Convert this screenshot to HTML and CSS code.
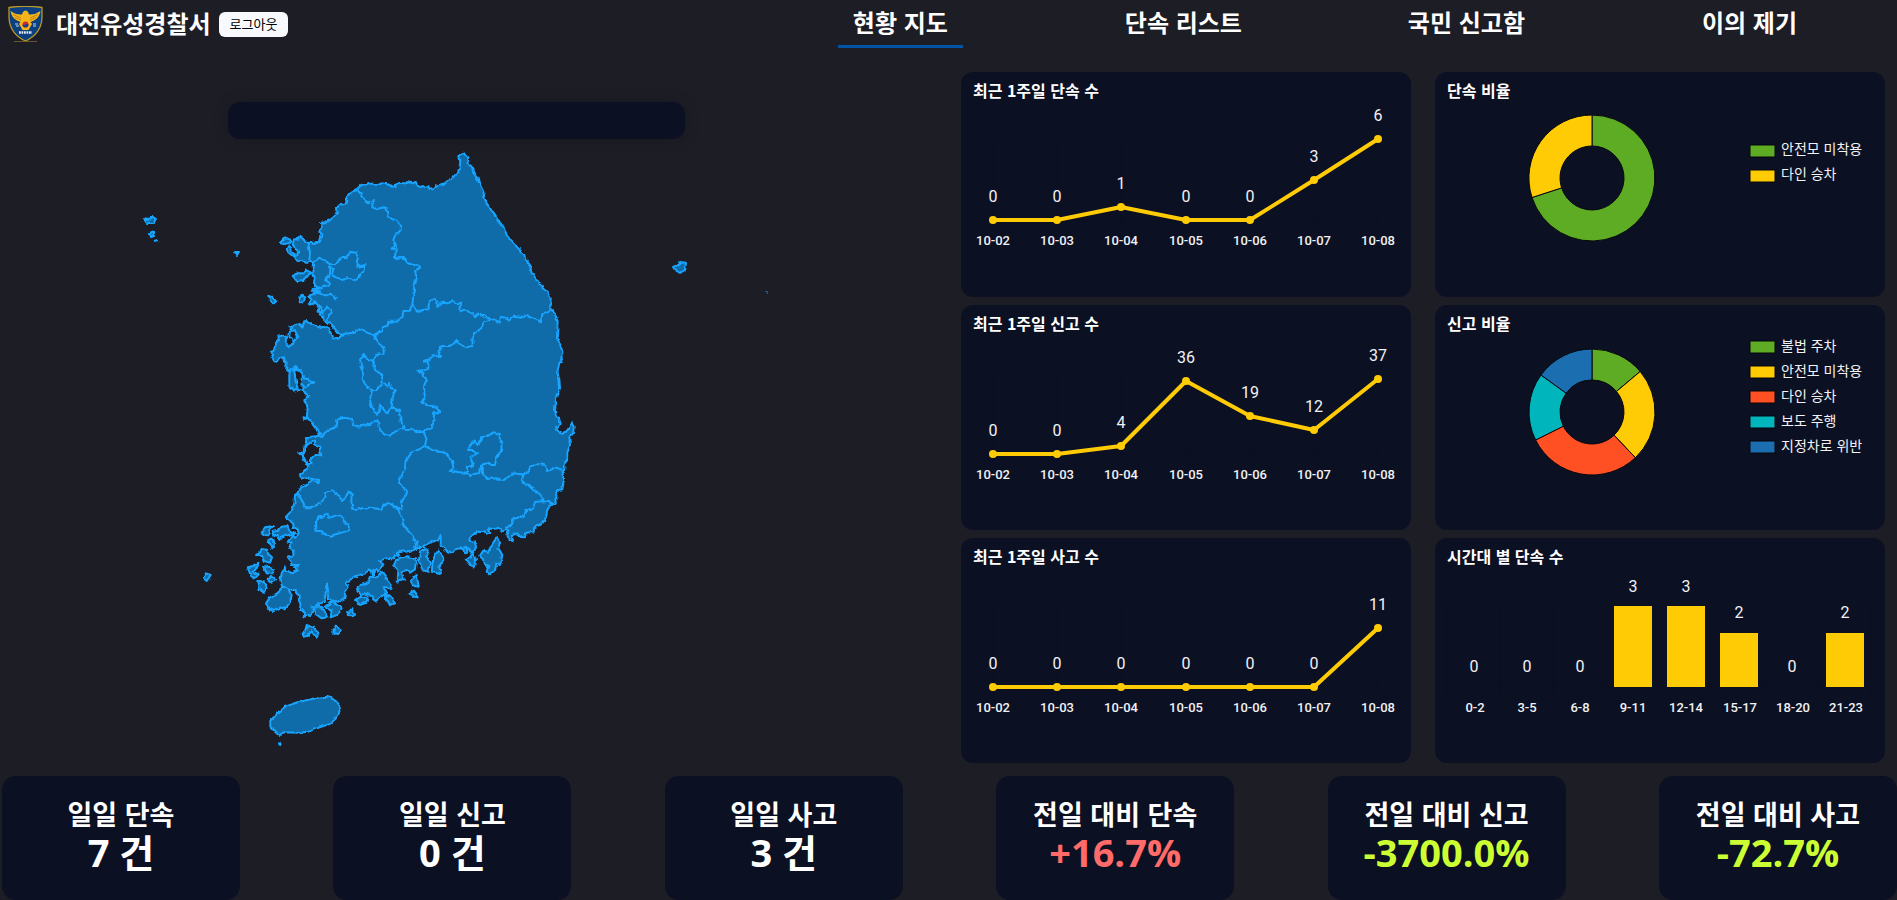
FILE: index.html
```html
<!DOCTYPE html>
<html lang="ko">
<head>
<meta charset="utf-8">
<meta name="viewport" content="width=device-width, initial-scale=1">
<title>대전유성경찰서 - 현황 지도</title>
<link rel="stylesheet" href="styles.css">
</head>
<body>
<header class="header">
  <div class="brand">
    <svg class="logo" viewBox="0 0 35 36" aria-hidden="true">
      <path d="M1 1.500Q17.500-.8 34 1.500V12Q33 28 17.500 35Q2 28 1 12Z" fill="#0b3f7f" stroke="#b8962a" stroke-width="1.300"/>
      <path d="M2.500 5Q8 9 14 8.500Q15 4.500 17.500 4.500Q20 4.500 21 8.500Q27 9 32.500 5Q31.500 11.500 26 14.500L22.500 16L24 18L20.500 24H14.500L11 18L12.500 16L9 14.500Q3.500 11.500 2.500 5Z" fill="#f3b51b"/>
      <path d="M5 8.500L13 12M7 11.500L13 14M30 8.500L22 12M28 11.500L22 14" stroke="#b97708" stroke-width=".8"/>
      <circle cx="17.500" cy="18.500" r="3" fill="#d3262f"/><path d="M14.500 18.500a3 3 0 0 0 6 0q-1.500-1.500-3 0t-3 0Z" fill="#173f95"/>
      <path d="M7 18h3M8 20h3M25 18h3M25 20h3" stroke="#c9d6ea" stroke-width="1.200"/>
      <path d="M11 26.500h13" stroke="#e8edf5" stroke-width="2.400" stroke-dasharray="1.800 .7"/>
      <path d="M6 35.500H29" stroke="#75652c" stroke-width=".8"/>
    </svg>
    <span class="brand-name">대전유성경찰서</span>
    <button class="logout" type="button">로그아웃</button>
  </div>
  <nav class="nav">
    <a class="nav-link active" href="#map">현황 지도</a>
    <a class="nav-link" href="#list">단속 리스트</a>
    <a class="nav-link" href="#report">국민 신고함</a>
    <a class="nav-link" href="#objection">이의 제기</a>
  </nav>
</header>

<main class="main">
  <section class="map-area" id="map">
    <div class="map-caption"></div>
    <svg class="map" viewBox="0 139 913 624" role="img" aria-label="대한민국 지도">
      <defs>
        <filter id="coast" x="0" y="0" width="1" height="1" color-interpolation-filters="sRGB">
          <feTurbulence type="fractalNoise" baseFrequency=".18" numOctaves="2" seed="4"/>
          <feDisplacementMap in="SourceGraphic" scale="4" xChannelSelector="R" yChannelSelector="G"/>
        </filter>
      </defs>
      <g filter="url(#coast)">
      <rect x="0" y="139" width="913" height="624" fill="none"/>
      <g class="land" transform="translate(240 140) scale(.33333)">
        <path d="M670 38L663 40L658 48L661 65L659 82L655 97L645 105L635 118L622 124L615 130L603 133L590 140L586 139L584 147L577 148L565 138L552 140L535 136L530 133L527 125L519 130L510 127L500 130L490 130L478 128L468 137L455 140L448 134L440 132L425 130L410 136L400 131L388 131L377 136L360 138L352 146L340 152L325 163L320 172L318 188L308 194L300 194L291 203L292 216L283 230L270 240L255 247L243 248L245 262L240 270L244 285L240 305L222 312L215 307L203 305L196 306L190 298L180 290L172 298L162 298L158 310L165 325L175 335L172 345L165 352L172 365L185 362L192 368L203 368L210 362L220 370L218 380L221 390L218 400L224 412L222 430L230 441L245 445L218 447L217 452L240 454L222 462L205 467L215 478L206 494L225 490L225 484L235 498L233 515L245 516L242 525L253 538L262 548L272 553L285 567L300 585L300 592L292 597L278 595L270 578L262 562L240 560L215 552L205 546L200 540L195 543L187 560L175 553L160 558L150 562L148 568L165 572L163 580L175 590L163 600L158 615L147 622L140 612L141 590L128 586L115 590L117 600L108 608L103 622L104 632L93 635L100 643L94 652L98 655L103 664L112 665L118 655L130 652L132 665L140 670L138 688L145 694L155 685L162 686L160 682L165 680L178 689L184 690L186 705L190 715L188 735L190 755L205 767L208 771L193 780L198 790L201 795L203 805L200 835L190 832L192 840L205 838L215 843L219 852L230 865L235 882L243 880L245 887L195 892L202 898L200 912L190 922L187 938L175 941L187 944L192 960L205 980L203 985L180 1003L182 1012L190 1015L220 1017L235 1020L232 1027L215 1022L195 1035L182 1045L175 1060L165 1067L163 1090L155 1112L138 1130L150 1142L160 1152L160 1162L172 1167L176 1178L170 1195L158 1187L152 1195L143 1205L156 1210L148 1222L158 1230L161 1245L142 1250L152 1262L155 1275L175 1275L162 1282L175 1290L156 1300L139 1290L135 1282L125 1300L121 1320L125 1335L142 1348L155 1350L167 1350L175 1359L177 1380L182 1395L179 1410L191 1411L193 1432L201 1425L210 1428L222 1405L217 1400L240 1392L252 1385L257 1365L259 1335L261 1330L265 1358L263 1378L279 1383L295 1385L313 1375L316 1352L323 1340L318 1328L327 1325L345 1310L361 1303L367 1306L375 1305L386 1285L395 1290L400 1310L402 1290L408 1287L413 1295L425 1285L430 1270L417 1262L440 1255L462 1255L465 1245L478 1248L473 1235L490 1231L503 1237L520 1230L533 1225L550 1218L565 1210L577 1205L585 1203L597 1195L602 1185L602 1218L615 1227L625 1235L638 1240L648 1227L662 1225L672 1229L677 1240L684 1227L698 1237L708 1220L704 1205L688 1202L690 1190L708 1181L712 1172L735 1174L738 1184L752 1180L745 1165L760 1167L775 1163L785 1175L800 1170L806 1202L815 1205L818 1185L831 1180L842 1191L855 1192L859 1178L880 1175L883 1162L905 1152L915 1140L920 1125L921 1112L930 1096L933 1097L947 1088L946 1070L955 1050L967 1048L972 1020L972 1010L967 1003L972 992L975 970L981 958L983 935L990 915L988 895L1000 878L1001 860L995 848L983 870L970 882L958 878L950 868L948 861L962 852L957 835L948 827L945 812L947 785L950 765L960 745L958 718L953 695L957 672L968 655L967 635L960 612L951 595L953 540L943 520L931 500L932 475L920 455L908 445L905 433L890 423L887 410L875 400L870 375L855 355L853 345L835 325L812 302L800 285L793 265L772 237L750 205L740 190L733 172L730 155L720 135L712 115L700 98L695 80L686 68L684 55Z"/>
        <g class="sea">
          <path d="M160 684L178 690L188 705L187 752L174 750L163 705ZM203 913L222 902L222 913L238 920L244 946L225 944L210 960L212 972L200 972L188 944ZM150 572L165 572L174 590L160 604L148 590Z"/>
        </g>
        <path d="M222 455L235 460L255 466L275 465L285 475L292 472M237 494L250 520L260 500L273 512L268 530L258 545M163 690L165 710L172 745L165 752L148 740L148 705L150 692ZM188 715L208 717L212 725L223 727L205 735L193 745"/>
        <g class="border">
          <path d="M352 146L355 158L365 160L375 185L385 190L402 180L396 195L412 207L430 202L440 204L443 232L460 237L483 255L482 270L465 287L460 300L465 317L458 326L467 327L465 355L485 352L510 370L530 374L543 384L525 393L531 413L523 440L520 465L517 495L530 513L565 508L567 485L580 477L593 485L592 500L605 488L625 490L638 481L650 490L667 488L655 507L660 514L675 508L690 519L700 520L705 532L718 520L740 532L765 540L780 547L783 530L795 533L805 542L822 530L840 533L860 525L880 536L900 544L907 525L935 508M517 495L510 512L490 513L488 530L470 545L445 545L442 558L425 563L427 573L402 583L405 598M300 585L325 580L345 578L355 568L375 575L402 587L412 602L430 625L432 642L415 640L400 660L400 680M752 538L733 545L725 560L705 578L697 594L698 618L680 622L662 614L648 602L637 618L605 618L595 635L600 652L580 645L568 658L552 663L563 665L568 682L552 690L532 692L550 700L552 710L560 718L552 738L554 770L545 788L560 795L590 800L600 817L583 816L580 845L575 865L550 875L530 877L513 867L500 868L490 862L482 845L480 812L455 802L440 820L422 797L412 825L395 800L390 780L396 750L380 742L368 718L372 700L363 675L360 655L372 645L385 658L400 663L405 690L420 700L428 715L422 735L410 750L396 750M428 732L443 738L448 729L456 748L467 751L459 765L455 802M245 887L265 870L290 860L292 838L315 833L337 838L340 855L355 860L385 855L412 840L418 870L432 882L450 890L465 875L490 865M550 875L560 897L555 915L565 925L583 933L615 938L635 960L640 982L628 992L660 997L680 998L690 1007L705 1001L720 1000L725 975L745 968L750 975L765 975L772 950L783 935L785 915L779 900L780 882L760 877L740 890L727 890L725 900L711 915L704 902L690 915L687 930L700 930L711 940L698 948L687 953L698 965L695 982L680 980L682 998M725 975L730 1003L745 1017L770 1015L792 1020L820 1000L842 1003L850 1007L868 992L870 980L890 972L915 975L920 993L940 985L955 988L970 993M850 1007L845 1024L865 1035L880 1050L895 1058L910 1075L907 1085L925 1082L940 1093M910 1083L885 1086L880 1105L855 1112L850 1128L820 1137L815 1157L798 1163L803 1175M555 917L540 927L515 938L497 962L495 985L485 1000L477 1027L490 1040L500 1062L485 1085L487 1108L473 1105L445 1088L430 1095L423 1108L405 1105L390 1103L365 1105L350 1110L338 1105L334 1083L335 1062L325 1055L315 1077L305 1080L290 1060L275 1050L255 1058L253 1075L240 1092L215 1100L197 1106L190 1088L175 1063M473 1105L485 1130L490 1155L505 1170L520 1195L530 1205L525 1225L545 1220M228 1145L233 1132L250 1130L260 1122L272 1133L290 1125L302 1127L310 1145L327 1155L325 1172L305 1178L287 1183L270 1188L258 1183L245 1174L229 1172ZM203 305L210 335L208 360L218 370L238 353L255 362L270 373L290 372L302 350L322 352L330 335L348 338L355 355L352 380L373 375L370 395L360 410L340 422L325 415L305 420L275 405L280 388L267 380L268 400L258 420L270 432L240 445"/>
        </g>
        <g class="islands">
          <path d="M121 308L128 296L142 295L155 301L146 310L131 312ZM142 322L150 316L152 332L165 345L170 348L158 348L140 332ZM158 408L175 400L190 400L198 388L216 400L202 407L190 420L170 423ZM88 470L98 470L108 485L96 490L90 486ZM178 474L186 467L196 472L192 482L182 487Z"/>
          <path transform="translate(-150 1020)" d="M215 158L225 142L250 138L238 150L235 166L225 165ZM248 155L265 152L275 140L292 138L302 155L315 160L295 165L280 168L270 180L260 168L250 165ZM232 182L245 176L253 190L247 205L240 190ZM198 225L210 218L215 207L232 210L235 222L246 232L240 248L222 243L215 228ZM173 262L192 258L205 248L203 262L188 275L206 283L195 295L183 288L178 275ZM222 258L240 262L252 270L248 282L230 280ZM233 298L245 290L257 300L245 308ZM205 303L220 304L233 320L220 338L209 328ZM228 370L240 352L265 338L275 320L290 325L305 345L300 365L287 388L272 382L250 393L236 387ZM373 385L390 378L402 392L412 412L395 415L375 400ZM405 380L430 362L440 375L458 385L440 405L422 412L425 390ZM468 393L480 395L487 388L488 400L497 403L483 410ZM495 360L510 350L533 350L530 368L510 375ZM502 330L512 315L530 310L540 290L560 292L575 275L605 315L600 325L582 325L590 340L572 350L560 362L550 355L540 345L520 340L512 345ZM585 348L598 345L615 370L600 376L592 362ZM618 240L650 232L678 235L675 268L660 278L650 270L635 275L642 300L620 305L622 270L612 258ZM663 300L680 285L686 320L665 315ZM657 340L672 332L686 352L668 350ZM690 215L705 205L718 215L708 230L720 250L715 275L697 270L687 240ZM728 245L735 225L745 212L760 240L748 258L753 282L725 275ZM820 205L828 200L832 218L822 218ZM827 237L840 232L848 220L858 240L855 260L840 255ZM868 230L880 212L895 215L905 195L920 173L930 185L925 205L937 225L930 255L920 250L915 270L900 283L890 275L895 258L882 242ZM335 460L345 455L350 435L370 442L385 455L380 473L365 455L350 468L340 470ZM430 450L440 438L452 450L447 462L430 460ZM40 295L48 280L62 285L50 303ZM241 722L258 705L285 680L330 665L375 655L408 650L425 655L440 663L453 685L442 705L425 730L380 745L355 755L325 758L280 757L270 768L255 755L241 740ZM257 695L262 703M267 790L272 793L268 796Z"/>
        </g>
      </g>
      <g class="land">
        <path d="M144 218L148 219L153 217L156 219L153 224L147 224ZM150 234L154 232L154 236L151 237ZM154 241L158 240M235 252L239 252L237 255ZM673 267L678 265L680 262L686 263L685 270L680 273L675 270ZM767 292L768 293"/>
      </g>
      </g>
    </svg>
  </section>

  <section class="charts">
    <article class="panel">
      <h2 class="panel-title">최근 1주일 단속 수</h2>
      <svg class="chart" viewBox="0 36 450 189" role="img" aria-label="최근 1주일 단속 수">
        <path class="grid" d="M32 67V158M96 67V158M160 67V158M225 67V158M289 67V158M353 67V158M417 67V158M32 148H417"/>
        <path class="line" d="M32 148L96 148L160 135L225 148L289 148L353 108L417 67"/>
        <g class="dots"><circle cx="32" cy="148" r="4"/><circle cx="96" cy="148" r="4"/><circle cx="160" cy="135" r="4"/><circle cx="225" cy="148" r="4"/><circle cx="289" cy="148" r="4"/><circle cx="353" cy="108" r="4"/><circle cx="417" cy="67" r="4"/></g>
        <g class="values"><text x="32" y="130">0</text><text x="96" y="130">0</text><text x="160" y="117">1</text><text x="225" y="130">0</text><text x="289" y="130">0</text><text x="353" y="90">3</text><text x="417" y="49">6</text></g>
        <g class="ticks"><text x="32" y="173">10-02</text><text x="96" y="173">10-03</text><text x="160" y="173">10-04</text><text x="225" y="173">10-05</text><text x="289" y="173">10-06</text><text x="353" y="173">10-07</text><text x="417" y="173">10-08</text></g>
      </svg>
    </article>
    <article class="panel">
      <h2 class="panel-title">단속 비율</h2>
      <svg class="chart" viewBox="0 36 450 189" role="img" aria-label="단속 비율">
        <g class="donut" transform="translate(157 106)">
          <path class="c1" d="M0-63A63 63 0 1 1-60 19.500L-30.400 9.900A32 32 0 1 0 0-32Z"/>
          <path class="c2" d="M-60 19.500A63 63 0 0 1 0-63V-32A32 32 0 0 0-30.400 9.900Z"/>
          <rect class="c1" x="158" y="-33" width="25" height="12"/><rect class="c2" x="158" y="-8" width="25" height="12"/>
        </g>
        <g class="legend"><text x="346" y="82">안전모 미착용</text><text x="346" y="107">다인 승차</text></g>
      </svg>
    </article>
    <article class="panel">
      <h2 class="panel-title">최근 1주일 신고 수</h2>
      <svg class="chart" viewBox="0 36 450 189" role="img" aria-label="최근 1주일 신고 수">
        <path class="grid" d="M32 67V158M96 67V158M160 67V158M225 67V158M289 67V158M353 67V158M417 67V158M32 149H417"/>
        <path class="line" d="M32 149L96 149L160 141L225 76L289 111L353 125L417 74"/>
        <g class="dots"><circle cx="32" cy="149" r="4"/><circle cx="96" cy="149" r="4"/><circle cx="160" cy="141" r="4"/><circle cx="225" cy="76" r="4"/><circle cx="289" cy="111" r="4"/><circle cx="353" cy="125" r="4"/><circle cx="417" cy="74" r="4"/></g>
        <g class="values"><text x="32" y="131">0</text><text x="96" y="131">0</text><text x="160" y="123">4</text><text x="225" y="58">36</text><text x="289" y="93">19</text><text x="353" y="107">12</text><text x="417" y="56">37</text></g>
        <g class="ticks"><text x="32" y="174">10-02</text><text x="96" y="174">10-03</text><text x="160" y="174">10-04</text><text x="225" y="174">10-05</text><text x="289" y="174">10-06</text><text x="353" y="174">10-07</text><text x="417" y="174">10-08</text></g>
      </svg>
    </article>
    <article class="panel">
      <h2 class="panel-title">신고 비율</h2>
      <svg class="chart" viewBox="0 36 450 189" role="img" aria-label="신고 비율">
        <g class="donut" transform="translate(157 107)">
          <path class="c1" d="M0-63A63 63 0 0 1 48.200-40.500L24.500-20.600A32 32 0 0 0 0-32Z"/>
          <path class="c2" d="M48.200-40.500A63 63 0 0 1 43.400 45.700L22 23.200A32 32 0 0 0 24.500-20.600Z"/>
          <path class="c3" d="M43.400 45.700A63 63 0 0 1-56.400 28L-28.700 14.200A32 32 0 0 0 22 23.200Z"/>
          <path class="c4" d="M-56.400 28A63 63 0 0 1-51-37L-25.900-18.800A32 32 0 0 0-28.700 14.200Z"/>
          <path class="c5" d="M-51-37A63 63 0 0 1 0-63V-32A32 32 0 0 0-25.900-18.800Z"/>
          <rect class="c1" x="158" y="-71" width="25" height="12"/><rect class="c2" x="158" y="-46" width="25" height="12"/><rect class="c3" x="158" y="-21" width="25" height="12"/><rect class="c4" x="158" y="4" width="25" height="12"/><rect class="c5" x="158" y="29" width="25" height="12"/>
        </g>
        <g class="legend"><text x="346" y="46">불법 주차</text><text x="346" y="71">안전모 미착용</text><text x="346" y="96">다인 승차</text><text x="346" y="121">보도 주행</text><text x="346" y="146">지정차로 위반</text></g>
      </svg>
    </article>
    <article class="panel">
      <h2 class="panel-title">최근 1주일 사고 수</h2>
      <svg class="chart" viewBox="0 36 450 189" role="img" aria-label="최근 1주일 사고 수">
        <path class="grid" d="M32 67V158M96 67V158M160 67V158M225 67V158M289 67V158M353 67V158M417 67V158M32 149H417"/>
        <path class="line" d="M32 149L96 149L160 149L225 149L289 149L353 149L417 90"/>
        <g class="dots"><circle cx="32" cy="149" r="4"/><circle cx="96" cy="149" r="4"/><circle cx="160" cy="149" r="4"/><circle cx="225" cy="149" r="4"/><circle cx="289" cy="149" r="4"/><circle cx="353" cy="149" r="4"/><circle cx="417" cy="90" r="4"/></g>
        <g class="values"><text x="32" y="131">0</text><text x="96" y="131">0</text><text x="160" y="131">0</text><text x="225" y="131">0</text><text x="289" y="131">0</text><text x="353" y="131">0</text><text x="417" y="72">11</text></g>
        <g class="ticks"><text x="32" y="174">10-02</text><text x="96" y="174">10-03</text><text x="160" y="174">10-04</text><text x="225" y="174">10-05</text><text x="289" y="174">10-06</text><text x="353" y="174">10-07</text><text x="417" y="174">10-08</text></g>
      </svg>
    </article>
    <article class="panel">
      <h2 class="panel-title">시간대 별 단속 수</h2>
      <svg class="chart" viewBox="0 36 450 189" role="img" aria-label="시간대 별 단속 수">
        <path class="grid" d="M12 68V159M65 68V159M118 68V159M171 68V159M224 68V159M277 68V159M330 68V159M383 68V159M436 68V159M12 149H436"/>
        <g class="bars"><rect x="179" y="68" width="38" height="81"/><rect x="232" y="68" width="38" height="81"/><rect x="285" y="95" width="38" height="54"/><rect x="391" y="95" width="38" height="54"/></g>
        <g class="values"><text x="39" y="134">0</text><text x="92" y="134">0</text><text x="145" y="134">0</text><text x="198" y="54">3</text><text x="251" y="54">3</text><text x="304" y="80">2</text><text x="357" y="134">0</text><text x="410" y="80">2</text></g>
        <g class="ticks"><text x="40" y="174">0-2</text><text x="92" y="174">3-5</text><text x="145" y="174">6-8</text><text x="198" y="174">9-11</text><text x="251" y="174">12-14</text><text x="305" y="174">15-17</text><text x="358" y="174">18-20</text><text x="411" y="174">21-23</text></g>
      </svg>
    </article>
  </section>
</main>

<section class="stats">
  <div class="stat"><h3 class="stat-title">일일 단속</h3><p class="stat-value">7 건</p></div>
  <div class="stat"><h3 class="stat-title">일일 신고</h3><p class="stat-value">0 건</p></div>
  <div class="stat"><h3 class="stat-title">일일 사고</h3><p class="stat-value">3 건</p></div>
  <div class="stat"><h3 class="stat-title">전일 대비 단속</h3><p class="stat-value up">+16.7%</p></div>
  <div class="stat"><h3 class="stat-title">전일 대비 신고</h3><p class="stat-value down">-3700.0%</p></div>
  <div class="stat"><h3 class="stat-title">전일 대비 사고</h3><p class="stat-value down">-72.7%</p></div>
</section>
</body>
</html>
```
FILE: styles.css
```css
* { box-sizing: border-box; }
body {
  margin: 0;
  background: #1c1d25;
  color: #fff;
  font-family: "Noto Sans CJK KR", sans-serif;
}
h2, h3, p { margin: 0; }

.header {
  display: grid;
  grid-template-columns: 2fr 3fr;
}
.brand {
  display: flex;
  align-items: center;
  padding-left: 8px;
}
.logo { width: 35px; height: 36px; margin-right: 13px; }
.brand-name { font-size: 24px; font-weight: 700; line-height: 44px; padding-bottom: 2px; }
.logout {
  margin-left: 8px;
  height: 25px;
  padding: 0 11px;
  border: 0;
  border-radius: 6px;
  background: #f8f9fd;
  color: #000;
  font-family: inherit;
  font-size: 13px;
  line-height: 24px;
}
.nav {
  display: grid;
  grid-template-columns: repeat(4, 1fr);
  justify-items: center;
  padding-right: 6px;
}
.nav-link {
  padding: 0 15px 2px;
  border-bottom: 3px solid transparent;
  color: #fff;
  font-size: 24px;
  font-weight: 700;
  line-height: 43px;
  text-decoration: none;
}
.nav-link.active { border-color: #0054a6; }

.main {
  display: grid;
  grid-template-columns: 913fr 924fr;
  gap: 48px;
  padding: 24px 12px 0 0;
}
.map-area { padding-top: 30px; }
.map-caption {
  width: 50%;
  height: 37px;
  margin: 0 auto;
  border-radius: 12px;
  background: #0c1023;
  box-shadow: 0 0 16px rgba(0, 0, 0, .15);
}
.map { display: block; width: 100%; }
.land { fill: #106ca8; stroke: #18a4ff; stroke-width: 2; stroke-linejoin: round; }
.land[transform] { stroke-width: 6; }
.sea { fill: #1c1d25; }
.border { fill: none; }

.charts {
  display: grid;
  grid-template-columns: 1fr 1fr;
  gap: 8px 24px;
}
.panel { border-radius: 12px; background: #0c1023; }
.panel-title {
  padding: 6px 12px;
  font-size: 16px;
  font-weight: 700;
  line-height: 24px;
}
.chart { display: block; width: 100%; overflow: visible; }
.grid { fill: none; stroke: rgba(0, 0, 0, .1); }
.line { fill: none; stroke: #ffcb05; stroke-width: 4; stroke-linejoin: round; }
.dots, .bars { fill: #ffcb05; }
.values { fill: #f2f2f4; font-family: Roboto, sans-serif; font-size: 16px; text-anchor: middle; }
.ticks { fill: #f2f2f4; font-family: Roboto, sans-serif; font-size: 13px; font-weight: 500; text-anchor: middle; }
.legend { fill: #f2f2f4; font-size: 14px; }
.donut { stroke: #05070d; stroke-width: 1; }
.c1 { fill: #5eac24; }
.c2 { fill: #ffcb05; }
.c3 { fill: #ff5023; }
.c4 { fill: #00b5bc; }
.c5 { fill: #1b6fb0; }

.stats {
  display: flex;
  justify-content: space-between;
  padding: 13px 0 0 2px;
}
.stat {
  width: 13%;
  max-width: 238px;
  padding: 20px 0 28px;
  border-radius: 14px;
  background: #0c1023;
  text-align: center;
  white-space: nowrap;
}
.stat-title { font-size: 27px; font-weight: 700; line-height: 36px; }
.stat-value {
  font-family: "Open Sans", "Noto Sans CJK KR", sans-serif;
  font-size: 38px;
  font-weight: 700;
  line-height: 40px;
}
.up { color: #ff6b68; }
.down { color: #ccff33; }
```
